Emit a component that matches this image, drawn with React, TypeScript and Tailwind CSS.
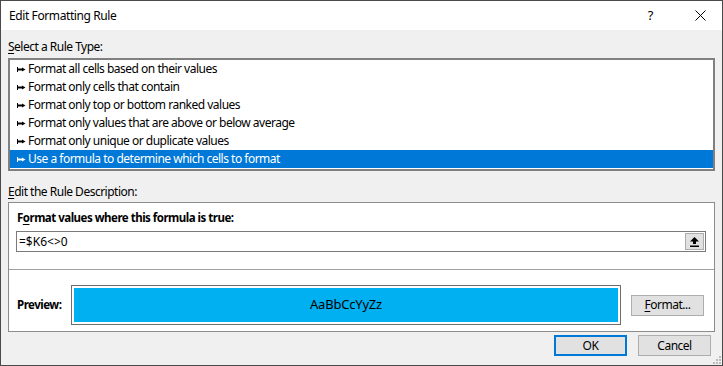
import React from "react";

const rules = [
  "Format all cells based on their values",
  "Format only cells that contain",
  "Format only top or bottom ranked values",
  "Format only values that are above or below average",
  "Format only unique or duplicate values",
  "Use a formula to determine which cells to format",
];

function Pointer({ color }: { color: string }) {
  return (
    <svg width="9" height="7" viewBox="0 0 9 7" className="shrink-0">
      <rect x="0" y="1" width="1" height="5" fill={color} />
      <rect x="1" y="2.5" width="5" height="2" fill={color} />
      <polygon points="5,1.5 8.5,3.5 5,5.5" fill={color} />
    </svg>
  );
}

function Btn({ children, primary }: { children: React.ReactNode; primary?: boolean }) {
  return (
    <div
      className={
        "flex h-[21px] w-[73px] items-center justify-center bg-[#e1e1e1] text-[12px] text-black " +
        (primary ? "border-2 border-[#0078d7]" : "border border-[#adadad]")
      }
    >
      {children}
    </div>
  );
}

export default function App() {
  return (
    <div
      className="flex h-[366px] w-[723px] flex-col border border-[#4a4a4a] bg-[#f0f0f0] text-[12px] tracking-[-0.5px] text-black"
      style={{ fontFamily: '"Noto Sans", "Open Sans", sans-serif' }}
    >
      {/* Title bar */}
      <div className="flex h-[29px] shrink-0 items-center bg-white pl-[8px]">
        <span className="text-[12px] tracking-[-0.4px]">Edit Formatting Rule</span>
        <span className="ml-auto mr-[42px] text-[13px]">?</span>
        <svg width="11" height="11" viewBox="0 0 11 11" className="mr-[16px]">
          <path d="M0.5 0.5 L10.5 10.5 M10.5 0.5 L0.5 10.5" stroke="#000" strokeWidth="1" />
        </svg>
      </div>

      {/* Body */}
      <div className="flex flex-1 flex-col px-[7px]">
        <div className="mt-[9px] h-[16px] leading-[16px]">
          <span className="underline underline-offset-2">S</span>elect a Rule Type:
        </div>

        <div className="mt-[3px] border-2 border-[#808080] bg-white pb-[1px]">
          {rules.map((r, i) => {
            const sel = i === rules.length - 1;
            return (
              <div
                key={r}
                className={
                  "flex h-[18px] items-center gap-[2px] pl-[7px] " +
                  (sel ? "bg-[#0078d7] text-white" : "text-black")
                }
              >
                <Pointer color={sel ? "#fff" : "#000"} />
                <span className="leading-[18px]">{r}</span>
              </div>
            );
          })}
        </div>

        <div className="mt-[13px] h-[16px] leading-[16px]">
          <span className="underline underline-offset-2">E</span>dit the Rule Description:
        </div>

        <div className="mt-[2px] flex flex-col border border-[#8c8c8c] bg-white">
          <div className="flex flex-col px-[7px] pt-[7px] pb-[17px]">
            <div className="h-[16px] pl-[1px] text-[11.5px] font-bold leading-[16px]">
              F<span className="underline underline-offset-2">o</span>rmat values where this formula is true:
            </div>
            <div className="mt-[5px] flex h-[21px] w-[690px] items-center border border-[#7a7a7a] bg-white">
              <span className="pl-[2px] tracking-normal">=$K6&lt;&gt;0</span>
              <div className="ml-auto mr-[1px] flex h-[17px] w-[19px] items-center justify-center border border-[#adadad] bg-[#e1e1e1]">
                <svg width="9" height="10" viewBox="0 0 9 10">
                  <polygon points="4.5,0 9,4.5 6,4.5 6,7 3,7 3,4.5 0,4.5" fill="#000" />
                  <rect x="0" y="8.5" width="9" height="1.5" fill="#000" />
                </svg>
              </div>
            </div>
          </div>
          <div className="h-px bg-[#a0a0a0]" />
          <div className="flex items-center pr-[9px] pl-[8px] pt-[15px] pb-[6px]">
            <div className="w-[54px] text-[11.5px] font-bold">Preview:</div>
            <div className="flex h-[40px] w-[550px] border border-[#6e6e6e] bg-white p-[2px]">
              <div className="flex flex-1 items-center justify-center bg-[#00b0f0] text-[13px] tracking-[-0.2px]">
                AaBbCcYyZz
              </div>
            </div>
            <div className="ml-[10px]">
              <Btn>
                <span>
                  <span className="underline underline-offset-2">F</span>ormat...
                </span>
              </Btn>
            </div>
          </div>
        </div>

        <div className="mt-[3px] flex justify-end gap-[11px] pr-[4px]">
          <Btn primary>OK</Btn>
          <Btn>Cancel</Btn>
        </div>

        <div className="relative flex-1">
          <svg width="8" height="8" viewBox="0 0 8 8" className="absolute right-[-6px] bottom-[1px]">
            <rect x="6" y="0" width="2" height="2" fill="#bcbcbc" />
            <rect x="3" y="3" width="2" height="2" fill="#bcbcbc" />
            <rect x="6" y="3" width="2" height="2" fill="#bcbcbc" />
            <rect x="0" y="6" width="2" height="2" fill="#bcbcbc" />
            <rect x="3" y="6" width="2" height="2" fill="#bcbcbc" />
            <rect x="6" y="6" width="2" height="2" fill="#bcbcbc" />
          </svg>
        </div>
      </div>
    </div>
  );
}
